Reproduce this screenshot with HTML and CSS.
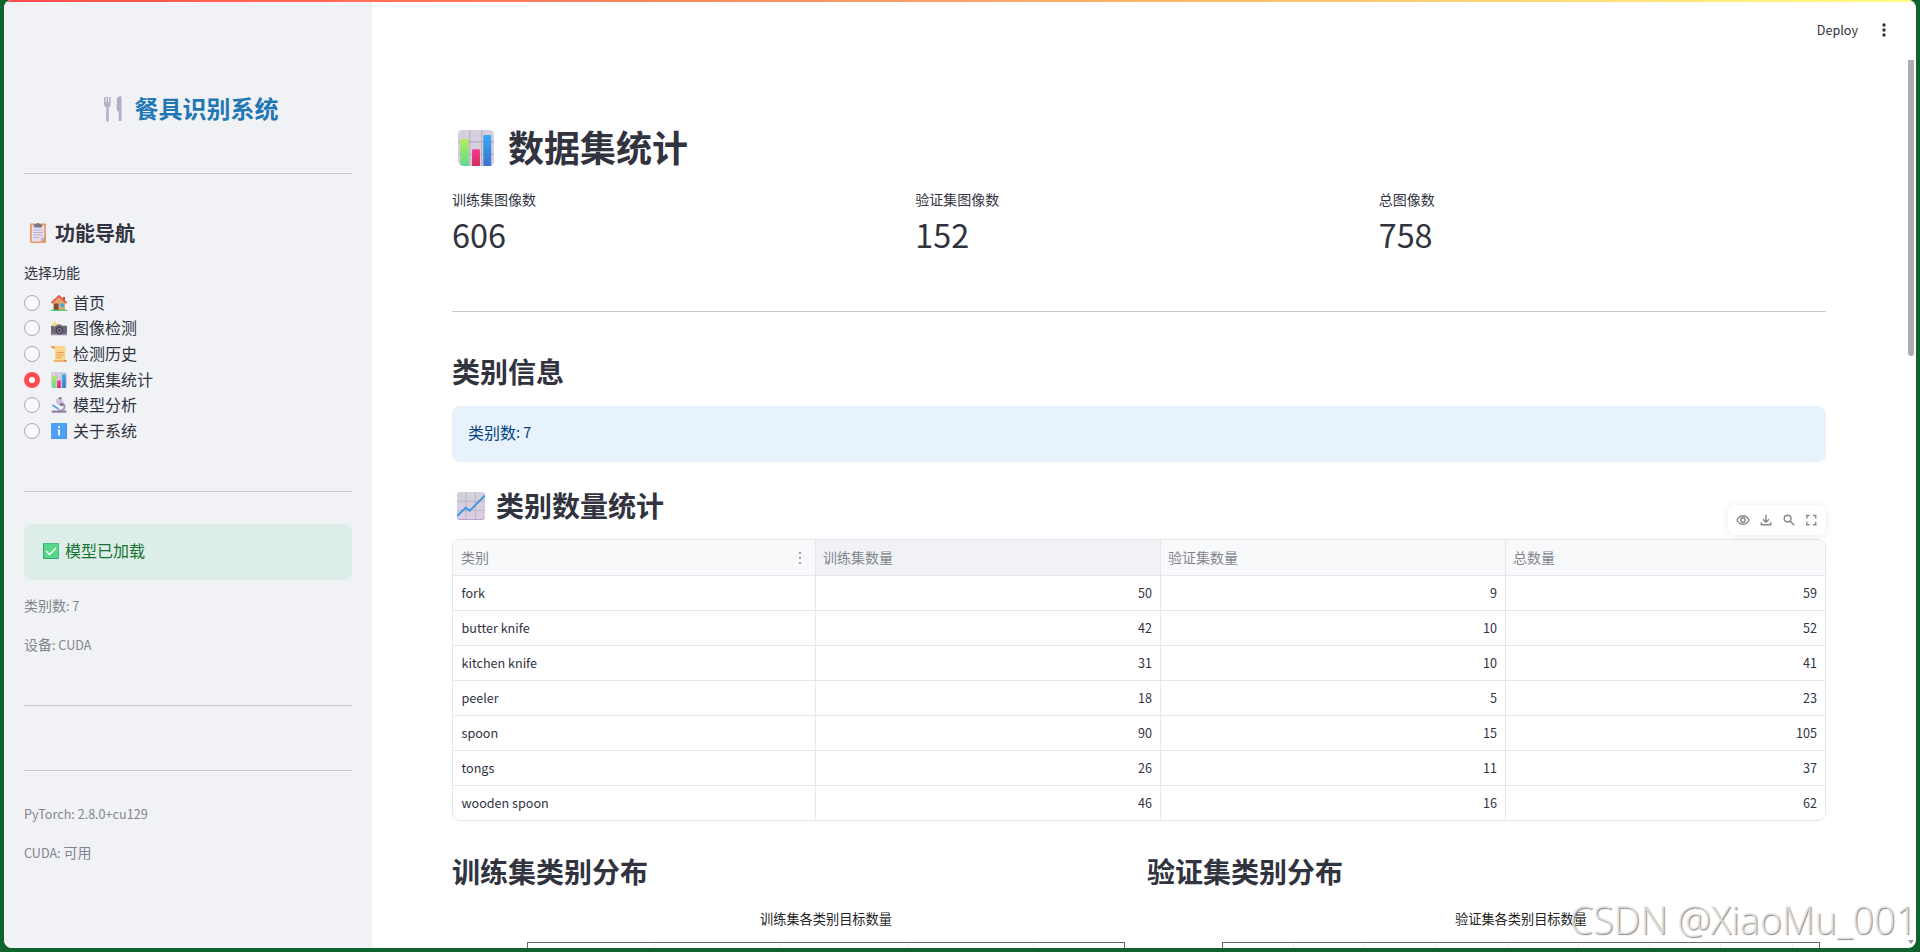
FILE: index.html
```html
<!DOCTYPE html>
<html lang="zh-CN">
<head>
  <meta charset="UTF-8">
  <meta name="viewport" content="width=device-width, initial-scale=1.0">
  <title>餐具识别系统</title>
  <link rel="stylesheet" href="styles.css">
</head>
<body>
  <svg class="sprite" width="0" height="0">
    <defs>
      <linearGradient id="g-pad" x1="0" y1="0" x2="0" y2="1">
        <stop offset="0" stop-color="#d5d0dc"/><stop offset="1" stop-color="#dacde2"/>
      </linearGradient>
      <linearGradient id="g-green" x1="0" y1="0" x2="0" y2="1">
        <stop offset="0" stop-color="#b3ec5c"/><stop offset="1" stop-color="#5ddb8e"/>
      </linearGradient>
      <linearGradient id="g-blue" x1="0" y1="0" x2="0" y2="1">
        <stop offset="0" stop-color="#36a8f5"/><stop offset="1" stop-color="#3b74ca"/>
      </linearGradient>
      <linearGradient id="g-pink" x1="0" y1="0" x2="0" y2="1">
        <stop offset="0" stop-color="#f8378d"/><stop offset="1" stop-color="#cb2e60"/>
      </linearGradient>
    </defs>
    <symbol id="e-bars" viewBox="0 0 32 32">
      <rect width="32" height="32" rx="4" fill="url(#g-pad)"/>
      <path d="M10.500 0v32M21 0v32M0 10.500h32M0 21.500h32" stroke="#b7b0c0" stroke-width="1"/>
      <path d="M2 9q0-1 1-1h5.500q1 0 1 1v23H5q-3-1-3-3z" fill="url(#g-green)"/>
      <path d="M12.500 18q0-1 1-1h5q1 0 1 1v14h-7z" fill="url(#g-pink)"/>
      <path d="M22.500 5.500q0-1 1-1h5q1 0 1 1V32h-7z" fill="url(#g-blue)"/>
    </symbol>
    <symbol id="e-trend" viewBox="0 0 32 32">
      <rect width="32" height="32" rx="4" fill="#b293c9"/>
      <rect width="32" height="31" rx="4" fill="url(#g-pad)"/>
      <path d="M10.500 0v31M21 0v31M0 10.500h32M0 21h32" stroke="#b7b0c0" stroke-width="1"/>
      <path d="M0 27.500l10-9.500 4.500 3.500L32 4" fill="none" stroke="#3b95e3" stroke-width="2.200"/>
    </symbol>
    <symbol id="e-fork" viewBox="0 0 18 26">
      <path d="M0 1h1.500v5h1V.5H4V6h1V1h1.700v7.500Q6.500 11 4.800 11.300V25q-1.400 1.500-2.600 0V11.300Q.2 11 0 8.500z" fill="#b9aeca"/>
      <path d="M13 2q2-2.500 4.500-1.500v24q-1.300 1.300-2.800 0V15.500h-1Q12.500 15 12.700 8z" fill="#b5adc3"/>
    </symbol>
    <symbol id="e-clip" viewBox="0 0 32 40">
      <rect y="1" width="32" height="39" rx="2.500" fill="#e69a68"/>
      <path d="M3.500 5h25v24l-7 8h-18z" fill="#e6dff0"/>
      <path d="M28.500 29l-7 8v-6q0-2 2-2z" fill="#c5b3d8"/>
      <path d="M6.500 14h19M6.500 19h19M6.500 24h19M6.500 29h12" stroke="#b3a9c2" stroke-width="1.800"/>
      <path d="M8 4q0-1.500 1.500-1.500h2.500Q16-2.500 20 2.500h2.500Q24 2.500 24 4v3.500q0 1.500-1.500 1.500h-13Q8 9 8 7.500z" fill="#7f7788"/>
    </symbol>
    <symbol id="e-home" viewBox="0 0 32 32">
      <path d="M24 4h4v8h-4z" fill="#a9585a"/>
      <path d="M4 15L16 4l12 11v15H4z" fill="#e5a46d"/>
      <path d="M1 16L16 2l15 14" fill="none" stroke="#e9543f" stroke-width="3.500"/>
      <rect x="6" y="17" width="9" height="13" fill="#79503f"/>
      <rect x="19" y="17" width="7" height="7" fill="#35aee8"/>
      <rect y="29.500" width="32" height="2.500" rx="1" fill="#43cf75"/>
    </symbol>
    <symbol id="e-camera" viewBox="0 0 32 32">
      <path d="M0 13q0-1.500 1.500-1.500h9L12 9h8l2 2.500h8.500q1.500 0 1.500 1.500v15H0z" fill="#6d6578"/>
      <path d="M0 27h32v3.500H0z" fill="#958aa3"/>
      <circle cx="17" cy="21" r="7.500" fill="#474052"/>
      <circle cx="17" cy="21" r="5" fill="#8d829b"/>
      <circle cx="17" cy="21" r="2.700" fill="#3c3545"/>
      <path d="M7 1l2 5 5 2-5 2-2 5-2-5-5-2 5-2z" fill="#fbda62"/>
    </symbol>
    <symbol id="e-scroll" viewBox="0 0 32 32">
      <path d="M3 0h23q3 0 3 4v25H8V5H3Q0 4 0 0z" fill="#fad58e"/>
      <path d="M0 0q1-1 6 0 2 2 2 7-1-3-5-3Q0 3 0 0z" fill="#dd9a50"/>
      <path d="M5 28h22v4H7q-3-1-2-4z" fill="#edb668"/>
      <path d="M25 28h7q0 4-3 4h-3z" fill="#db9148"/>
      <path d="M11 13h14M11 18h14M11 23h9" stroke="#e0944e" stroke-width="1.800"/>
    </symbol>
    <symbol id="e-micro" viewBox="0 0 32 32">
      <path d="M22 10q8 4 7 11-1 5-6 7h-9v-3h6q5-1 5-5 0-4-5-6z" fill="#a497b5"/>
      <path d="M11 4l7-4 3 3 4 8-7 7-7-5q-2-5 0-9z" fill="#cdc0db"/>
      <path d="M15 1l5-1 2 4-5 1z" fill="#85798f"/>
      <circle cx="21" cy="15" r="3" fill="#756787"/>
      <path d="M3 16l12 8" stroke="#4aa5ee" stroke-width="3.500"/>
      <rect x="1" y="27" width="30" height="4.500" rx="1.500" fill="#9283a4"/>
    </symbol>
    <symbol id="e-info" viewBox="0 0 32 32">
      <rect width="32" height="32" rx="2" fill="#3f82df"/>
      <rect x="0" y="0" width="31" height="31" rx="2" fill="#4da2f5"/>
      <rect x="14.500" y="6" width="3.500" height="3.500" fill="#fff"/>
      <path d="M13 13h5v12h-3.500V15H13z" fill="#fff"/>
    </symbol>
    <symbol id="e-check" viewBox="0 0 32 32">
      <rect width="32" height="32" rx="2" fill="#36a877"/>
      <rect x="2" y="1" width="29" height="29" rx="2" fill="#55d88a"/>
      <path d="M6 16l7 7 13-13" fill="none" stroke="#fff" stroke-width="3"/>
    </symbol>
  </svg>

  <div class="window">
    <aside class="sidebar">
      <h1 class="brand"><svg class="emoji-fork"><use href="#e-fork"/></svg>餐具识别系统</h1>
      <hr>
      <h3 class="nav-title"><svg class="emoji-clip"><use href="#e-clip"/></svg>功能导航</h3>
      <p class="nav-label">选择功能</p>
      <ul class="nav">
        <li><span class="radio"></span><svg class="emoji"><use href="#e-home"/></svg>首页</li>
        <li><span class="radio"></span><svg class="emoji"><use href="#e-camera"/></svg>图像检测</li>
        <li><span class="radio"></span><svg class="emoji"><use href="#e-scroll"/></svg>检测历史</li>
        <li><span class="radio checked"></span><svg class="emoji"><use href="#e-bars"/></svg>数据集统计</li>
        <li><span class="radio"></span><svg class="emoji"><use href="#e-micro"/></svg>模型分析</li>
        <li><span class="radio"></span><svg class="emoji"><use href="#e-info"/></svg>关于系统</li>
      </ul>
      <hr class="hr-nav">
      <div class="alert success"><svg class="emoji"><use href="#e-check"/></svg>模型已加载</div>
      <p class="caption">类别数<span class="latin">: 7</span></p>
      <p class="caption">设备<span class="latin">: CUDA</span></p>
      <hr class="hr-device">
      <hr class="hr-env">
      <p class="caption env"><span class="latin">PyTorch: 2.8.0+cu129</span></p>
      <p class="caption"><span class="latin">CUDA: </span>可用</p>
    </aside>

    <main class="main">
      <header class="toolbar">
        <span class="deploy">Deploy</span>
        <svg class="kebab" width="4" height="14" viewBox="0 0 4 14"><circle cx="2" cy="2" r="1.700"/><circle cx="2" cy="7" r="1.700"/><circle cx="2" cy="12" r="1.700"/></svg>
      </header>

      <div class="content">
        <h1 class="page-title"><svg class="emoji-title"><use href="#e-bars"/></svg>数据集统计</h1>

        <div class="metrics">
          <div class="metric"><p>训练集图像数</p><strong>606</strong></div>
          <div class="metric"><p>验证集图像数</p><strong>152</strong></div>
          <div class="metric"><p>总图像数</p><strong>758</strong></div>
        </div>
        <hr>

        <h2 class="info-title">类别信息</h2>
        <div class="alert info">类别数<span class="latin">: 7</span></div>

        <h2 class="table-title"><svg class="emoji-trend"><use href="#e-trend"/></svg>类别数量统计</h2>
        <div class="table-wrap">
          <div class="table-tools">
            <svg viewBox="0 0 14 12" width="14" height="12"><path d="M1 6q2.200-4.300 6-4.300T13 6q-2.200 4.300-6 4.300T1 6z"/><circle cx="7" cy="6" r="2.200"/></svg>
            <svg viewBox="0 0 12 12" width="12" height="12"><path d="M6 .8v7M3 5.200l3 3 3-3M1.300 8.300v2.500h9.400V8.300"/></svg>
            <svg viewBox="0 0 12 12" width="12" height="12"><circle cx="4.600" cy="4.600" r="3.400"/><path d="M7.200 7.200L11.200 11.200"/></svg>
            <svg viewBox="0 0 12 12" width="12" height="12"><path d="M1.800 4.500v-3h2.700M8 1.500h2.700v3M10.700 7.800v3H8M4.500 10.800H1.800v-3"/></svg>
          </div>
          <table>
            <colgroup><col class="c1"><col class="c2"><col class="c3"><col class="c4"></colgroup>
            <thead>
              <tr>
                <th>类别<svg class="col-menu" width="2" height="12" viewBox="0 0 2 12"><path d="M0 0h2v2H0zM0 5h2v2H0zM0 10h2v2H0z"/></svg></th>
                <th class="hover">训练集数量</th><th>验证集数量</th><th>总数量</th>
              </tr>
            </thead>
            <tbody>
              <tr><td>fork</td><td>50</td><td>9</td><td>59</td></tr>
              <tr><td>butter knife</td><td>42</td><td>10</td><td>52</td></tr>
              <tr><td>kitchen knife</td><td>31</td><td>10</td><td>41</td></tr>
              <tr><td>peeler</td><td>18</td><td>5</td><td>23</td></tr>
              <tr><td>spoon</td><td>90</td><td>15</td><td>105</td></tr>
              <tr><td>tongs</td><td>26</td><td>11</td><td>37</td></tr>
              <tr><td>wooden spoon</td><td>46</td><td>16</td><td>62</td></tr>
            </tbody>
          </table>
        </div>

        <div class="charts">
          <section>
            <h2>训练集类别分布</h2>
            <figure>
              <figcaption>训练集各类别目标数量</figcaption>
              <div class="plot"><i></i><i></i><i></i><i></i></div>
            </figure>
          </section>
          <section>
            <h2>验证集类别分布</h2>
            <figure>
              <figcaption>验证集各类别目标数量</figcaption>
              <div class="plot plot-val"><i></i><i></i><i></i><i></i><i></i><i></i><i></i><i></i></div>
            </figure>
          </section>
        </div>
      </div>
      <div class="scroll-thumb"></div>
      <div class="scroll-arrow"></div>
    </main>
    <div class="stripe"></div>
  </div>
  <div class="watermark">CSDN @XiaoMu_001</div>
</body>
</html>
```
FILE: styles.css
```css
* {
  box-sizing: border-box;
  margin: 0;
  padding: 0;
}

body {
  height: 952px;
  padding: 0 4px 4px;
  overflow: hidden;
  background: #0f632f;
  color: #31333f;
  font-family: "Noto Sans CJK SC", "Noto Sans", sans-serif;
  font-size: 16px;
}

.sprite {
  position: absolute;
}

.window {
  position: relative;
  display: flex;
  height: 948px;
  overflow: hidden;
  background: #fff;
  border-radius: 8px;
}

.stripe {
  position: absolute;
  top: 0;
  left: 0;
  right: 0;
  height: 2px;
  background: linear-gradient(90deg, #ff4b4b, #fffd80);
}

hr {
  height: 1px;
  border: none;
  background: #cacbd0;
}

svg {
  flex: none;
}

.latin {
  font-size: 0.9em;
  line-height: 1;
  white-space: pre;
}

.emoji {
  width: 16px;
  height: 16px;
}

/* sidebar */
.sidebar {
  width: 368px;
  padding: 91px 20px 0;
  background: #f0f2f6;
}

.brand {
  display: flex;
  justify-content: center;
  align-items: center;
  height: 36px;
  margin-bottom: 46px;
  padding: 0 0 3px 6px;
  color: #1f77b4;
  font-size: 24px;
}

.emoji-fork {
  width: 18px;
  height: 26px;
  margin: 3px 13px 0 0;
}

.nav-title {
  display: flex;
  align-items: center;
  height: 30px;
  margin: 44px 0 14px;
  padding: 0 0 2px 6px;
  font-size: 20px;
}

.emoji-clip {
  width: 16px;
  height: 20px;
  margin: 2px 9px 0 0;
}

.nav-label {
  font-size: 14px;
  line-height: 20px;
}

.nav {
  margin-top: 8px;
  list-style: none;
}

.nav li {
  display: flex;
  align-items: center;
  height: 25.6px;
  padding-bottom: 2px;
}

.nav .emoji {
  margin: 2px 6px 0 11px;
}

.radio {
  width: 16px;
  height: 16px;
  margin-top: 2px;
  background: #f9fafc;
  border: 1px solid #a9aab1;
  border-radius: 50%;
}

.radio.checked {
  background: #fff;
  border: 5px solid #ff4b4b;
}

.hr-nav {
  margin: 47px 0 32px;
}

.alert {
  display: flex;
  align-items: center;
  height: 56px;
  padding: 0 16px 4px;
  border-radius: 8px;
}

.success {
  padding-left: 19px;
  background: #dceee7;
  color: #177233;
}

.success .emoji {
  margin: 2px 6px 0 0;
}

.caption {
  margin-top: 19px;
  color: #83858d;
  font-size: 14px;
  line-height: 20px;
}

.alert + .caption {
  margin-top: 15px;
}

.hr-device {
  margin: 51px 0 64px;
}

.caption.env {
  margin-top: 32px;
}

/* main area */
.main {
  position: relative;
  flex: 1;
}

.toolbar {
  display: flex;
  justify-content: flex-end;
  align-items: center;
  height: 60px;
  padding-right: 30px;
  font-size: 12.6px;
}

.deploy {
  padding-bottom: 2px;
}

.kebab {
  margin-left: 24px;
  fill: #31333f;
}

.content {
  padding: 65px 90px 0 80px;
}

.page-title {
  display: flex;
  align-items: center;
  height: 44px;
  padding: 0 0 2px 6px;
  font-size: 36px;
}

.emoji-title {
  width: 36px;
  height: 36px;
  margin: 3px 14px 0 0;
}

.metrics {
  display: grid;
  grid-template-columns: repeat(3, 1fr);
  gap: 16px;
  margin: 20px 0 57px;
}

.metric p {
  font-size: 14px;
  line-height: 20px;
}

.metric strong {
  display: block;
  margin-top: 5px;
  font-size: 32.4px;
  font-weight: 400;
  line-height: 40px;
}

h2 {
  height: 36px;
  font-size: 28px;
  line-height: 34px;
}

.info-title {
  margin: 42px 0 16px;
}

.info {
  background: #e8f2fc;
  color: #004280;
}

.table-title {
  display: flex;
  align-items: center;
  margin: 26px 0 15px;
  padding: 0 0 2px 5px;
}

.emoji-trend {
  width: 28px;
  height: 28px;
  margin: 2px 11px 0 0;
}

.table-wrap {
  position: relative;
  height: 282px;
  border: 1px solid #e6e7ea;
  border-radius: 8px;
}

.table-tools {
  position: absolute;
  top: -35px;
  right: -1px;
  display: flex;
  justify-content: space-between;
  align-items: center;
  width: 98px;
  height: 30px;
  padding: 0 9px 0 8px;
  background: #fff;
  border-radius: 8px;
  box-shadow: 0 1px 8px rgba(49, 51, 63, 0.1);
}

.table-tools svg {
  fill: none;
  stroke: #85868e;
  stroke-width: 1.400;
}

table {
  width: 1372px;
  table-layout: fixed;
  border-collapse: separate;
  border-spacing: 0;
  font-size: 12.6px;
}

.c1 { width: 363px; }
.c2 { width: 345px; }
.c3 { width: 345px; }

th,
td {
  padding: 0 8px;
  border-right: 1px solid #e6e7ea;
  border-bottom: 1px solid #e6e7ea;
  line-height: 20px;
}

th {
  height: 36px;
  padding: 0 7px 2px;
  background: #f8f9fb;
  color: #83858d;
  font-size: 14px;
  font-weight: 400;
  text-align: left;
}

th.hover {
  background: #f0f2f6;
}

th:first-child {
  padding-left: 8px;
  border-top-left-radius: 7px;
}

th:last-child {
  border-top-right-radius: 7px;
}

th:last-child,
td:last-child {
  border-right: none;
}

.col-menu {
  float: right;
  margin: 5px 7px 0 0;
  fill: #a3a4aa;
}

td {
  height: 35px;
  text-align: right;
}

td:first-child {
  padding-left: 8.5px;
  text-align: left;
}

tbody tr:last-child td {
  height: 34px;
  border-bottom: none;
}

.charts {
  display: grid;
  grid-template-columns: 1fr 1fr;
  gap: 16px;
  margin-top: 33px;
}

figure {
  padding: 19px 6px 0 75px;
}

figcaption {
  color: #222;
  font-size: 13.2px;
  line-height: 20px;
  text-align: center;
}

.plot {
  display: flex;
  height: 40px;
  margin-top: 13px;
  border: 1.500px solid #66676b;
  border-bottom: none;
}

.plot i {
  width: 126.500px;
  border-right: 1px solid #eee;
}

.plot-val i {
  width: 71.200px;
}

.scroll-thumb {
  position: absolute;
  top: 60px;
  right: 2px;
  width: 6px;
  height: 296px;
  background: #adacb1;
  border-radius: 0 0 3px 3px;
}

.scroll-arrow {
  position: absolute;
  right: 2px;
  bottom: 4px;
  border: 3px solid transparent;
  border-top: 4px solid #9b9b9f;
  border-bottom: none;
}

.watermark {
  position: absolute;
  right: 3px;
  bottom: 8px;
  color: rgba(232, 232, 232, 0.85);
  font-family: "Open Sans", sans-serif;
  font-size: 37.8px;
  font-weight: 300;
  line-height: 48px;
  text-shadow: 1px 1px 1px #888;
  white-space: nowrap;
}
```
